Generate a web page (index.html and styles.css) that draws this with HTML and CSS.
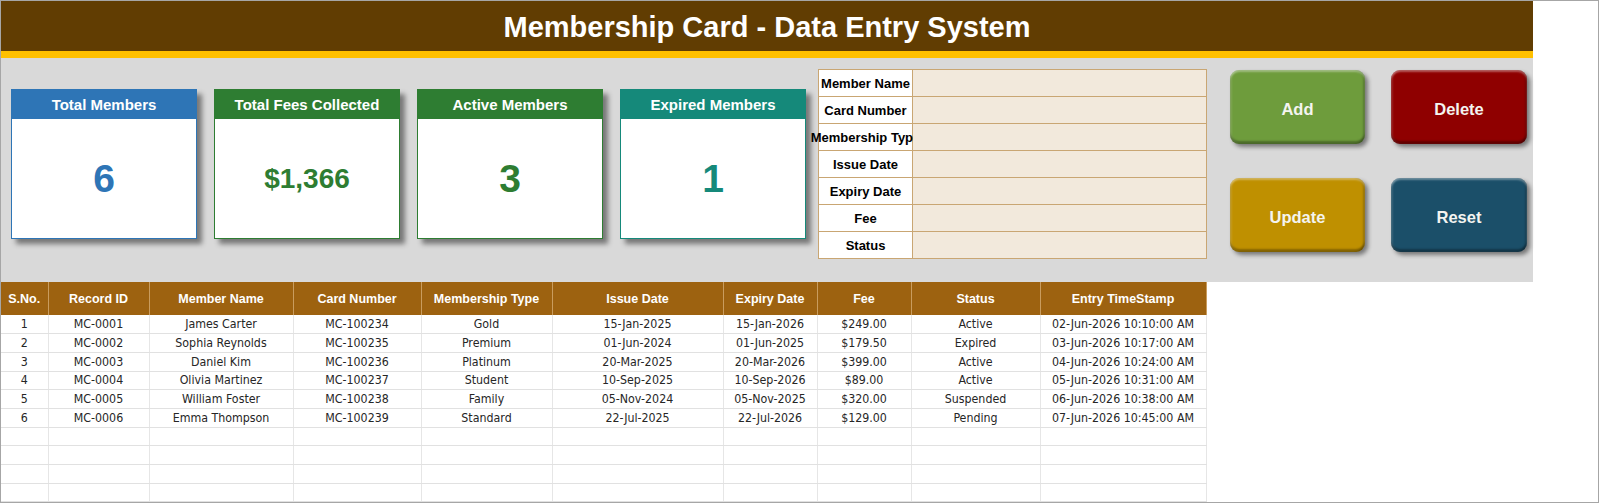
FILE: index.html
```html
<!DOCTYPE html>
<html lang="en">
<head>
    <meta charset="UTF-8">
    <meta name="viewport" content="width=device-width, initial-scale=1.0">
    <title>Membership Card - Data Entry System</title>
    <link rel="stylesheet" href="styles.css">
</head>
<body>
    <div class="sheet">
        <div class="dashboard">
            <div class="title-bar">
                <h1>Membership Card - Data Entry System</h1>
            </div>

            <div class="panel">
                <div class="cards">
                    <div class="card card-blue">
                        <div class="card-head">Total Members</div>
                        <div class="card-value">6</div>
                    </div>
                    <div class="card card-green">
                        <div class="card-head">Total Fees Collected</div>
                        <div class="card-value card-value-money">$1,366</div>
                    </div>
                    <div class="card card-green">
                        <div class="card-head">Active Members</div>
                        <div class="card-value">3</div>
                    </div>
                    <div class="card card-teal">
                        <div class="card-head">Expired Members</div>
                        <div class="card-value">1</div>
                    </div>
                </div>

                <div class="entry-form">
                    <div class="form-label">Member Name</div><div class="form-input"></div>
                    <div class="form-label">Card Number</div><div class="form-input"></div>
                    <div class="form-label">Membership Type</div><div class="form-input"></div>
                    <div class="form-label">Issue Date</div><div class="form-input"></div>
                    <div class="form-label">Expiry Date</div><div class="form-input"></div>
                    <div class="form-label">Fee</div><div class="form-input"></div>
                    <div class="form-label">Status</div><div class="form-input"></div>
                </div>

                <div class="actions">
                    <button class="btn btn-add">Add</button>
                    <button class="btn btn-delete">Delete</button>
                    <button class="btn btn-update">Update</button>
                    <button class="btn btn-reset">Reset</button>
                </div>
            </div>
        </div>

        <table class="records">
            <colgroup>
                <col class="col-sno">
                <col class="col-id">
                <col class="col-name">
                <col class="col-card">
                <col class="col-type">
                <col class="col-issue">
                <col class="col-expiry">
                <col class="col-fee">
                <col class="col-status">
                <col class="col-stamp">
            </colgroup>
            <thead>
                <tr>
                    <th>S.No.</th>
                    <th>Record ID</th>
                    <th>Member Name</th>
                    <th>Card Number</th>
                    <th>Membership Type</th>
                    <th>Issue Date</th>
                    <th>Expiry Date</th>
                    <th>Fee</th>
                    <th>Status</th>
                    <th>Entry TimeStamp</th>
                </tr>
            </thead>
            <tbody>
                <tr>
                    <td>1</td><td>MC-0001</td><td>James Carter</td><td>MC-100234</td><td>Gold</td>
                    <td>15-Jan-2025</td><td>15-Jan-2026</td><td>$249.00</td><td>Active</td><td>02-Jun-2026 10:10:00 AM</td>
                </tr>
                <tr>
                    <td>2</td><td>MC-0002</td><td>Sophia Reynolds</td><td>MC-100235</td><td>Premium</td>
                    <td>01-Jun-2024</td><td>01-Jun-2025</td><td>$179.50</td><td>Expired</td><td>03-Jun-2026 10:17:00 AM</td>
                </tr>
                <tr>
                    <td>3</td><td>MC-0003</td><td>Daniel Kim</td><td>MC-100236</td><td>Platinum</td>
                    <td>20-Mar-2025</td><td>20-Mar-2026</td><td>$399.00</td><td>Active</td><td>04-Jun-2026 10:24:00 AM</td>
                </tr>
                <tr>
                    <td>4</td><td>MC-0004</td><td>Olivia Martinez</td><td>MC-100237</td><td>Student</td>
                    <td>10-Sep-2025</td><td>10-Sep-2026</td><td>$89.00</td><td>Active</td><td>05-Jun-2026 10:31:00 AM</td>
                </tr>
                <tr>
                    <td>5</td><td>MC-0005</td><td>William Foster</td><td>MC-100238</td><td>Family</td>
                    <td>05-Nov-2024</td><td>05-Nov-2025</td><td>$320.00</td><td>Suspended</td><td>06-Jun-2026 10:38:00 AM</td>
                </tr>
                <tr>
                    <td>6</td><td>MC-0006</td><td>Emma Thompson</td><td>MC-100239</td><td>Standard</td>
                    <td>22-Jul-2025</td><td>22-Jul-2026</td><td>$129.00</td><td>Pending</td><td>07-Jun-2026 10:45:00 AM</td>
                </tr>
                <tr><td></td><td></td><td></td><td></td><td></td><td></td><td></td><td></td><td></td><td></td></tr>
                <tr><td></td><td></td><td></td><td></td><td></td><td></td><td></td><td></td><td></td><td></td></tr>
                <tr><td></td><td></td><td></td><td></td><td></td><td></td><td></td><td></td><td></td><td></td></tr>
                <tr><td></td><td></td><td></td><td></td><td></td><td></td><td></td><td></td><td></td><td></td></tr>
            </tbody>
        </table>
    </div>
</body>
</html>
```

FILE: styles.css
```css
* {
    margin: 0;
    padding: 0;
    box-sizing: border-box;
}

body {
    font-family: "Liberation Sans", Arial, sans-serif;
    background: #fff;
    overflow: hidden;
}

.sheet {
    width: 1599px;
    height: 503px;
    border: 1px solid #a6a6a6;
    background: #fff;
    overflow: hidden;
}

.dashboard {
    width: 1532px;
}

.title-bar {
    height: 57px;
    background: #613d02;
    border-bottom: 7px solid #ffc000;
    display: flex;
    justify-content: center;
    align-items: center;
    padding-top: 2px;
}

.title-bar h1 {
    color: #fff;
    font-size: 29px;
    font-weight: 700;
}

.panel {
    height: 224px;
    background: #d9d9d9;
    display: flex;
    align-items: flex-start;
    padding-left: 10px;
}

/* summary cards */
.cards {
    display: flex;
    gap: 17px;
    margin-top: 31px;
}

.card {
    width: 186px;
    height: 150px;
    background: #fff;
    border: 1px solid;
    box-shadow: 5px 5px 5px rgba(0,0,0,0.45);
    display: flex;
    flex-direction: column;
}

.card-head {
    height: 29px;
    color: #fff;
    font-size: 15px;
    font-weight: 700;
    display: flex;
    justify-content: center;
    align-items: center;
}

.card-value {
    flex: 1;
    display: flex;
    justify-content: center;
    align-items: center;
    font-size: 39px;
    font-weight: 700;
}

.card-value-money {
    font-size: 28px;
}

.card-blue { border-color: #2e75b6; color: #2e75b6; }
.card-blue .card-head { background: #2e75b6; }
.card-green { border-color: #2e7d32; color: #2e7d32; }
.card-green .card-head { background: #2e7d32; }
.card-teal { border-color: #15897a; color: #15897a; }
.card-teal .card-head { background: #15897a; }

/* entry form */
.entry-form {
    margin-left: 12px;
    margin-top: 11px;
    display: grid;
    grid-template-columns: 94px 294px;
    grid-auto-rows: 27px;
    border-top: 1px solid #c9a673;
    border-left: 1px solid #c9a673;
}

.form-label {
    background: #fff;
    border-right: 1px solid #c9a673;
    border-bottom: 1px solid #c9a673;
    display: flex;
    justify-content: center;
    align-items: center;
    white-space: nowrap;
    font-size: 13px;
    font-weight: 700;
    color: #000;
}

.form-input {
    position: relative;
    background: #f2e9dc;
    border-right: 1px solid #c9a673;
    border-bottom: 1px solid #c9a673;
}

/* action buttons */
.actions {
    margin-left: 23px;
    margin-top: 12px;
    display: grid;
    grid-template-columns: 135px 136px;
    grid-template-rows: 74px 74px;
    gap: 34px 26px;
}

.btn {
    border: none;
    border-radius: 9px;
    padding-top: 4px;
    color: #f4f4f0;
    font-family: "Liberation Sans", Arial, sans-serif;
    font-size: 16.5px;
    font-weight: 700;
    cursor: pointer;
    box-shadow: inset 0 2px 2px rgba(255,255,255,0.35),
                inset 0 -3px 2px rgba(0,0,0,0.3),
                inset 2px 0 2px rgba(255,255,255,0.12),
                inset -2px 0 2px rgba(0,0,0,0.2),
                3px 3px 4px rgba(0,0,0,0.45);
}

.btn-add { background: #6e9c3c; }
.btn-delete { background: #8f0000; }
.btn-update { background: #bf9000; }
.btn-reset { background: #1b4f69; }

/* records table */
.records {
    border-collapse: collapse;
    table-layout: fixed;
    width: 1205px;
}

.col-sno { width: 47px; }
.col-id { width: 101px; }
.col-name { width: 144px; }
.col-card { width: 128px; }
.col-type { width: 131px; }
.col-issue { width: 171px; }
.col-expiry { width: 94px; }
.col-fee { width: 94px; }
.col-status { width: 129px; }
.col-stamp { width: 166px; }

.records th {
    height: 33px;
    background: #9d6210;
    color: #fff;
    font-size: 12.5px;
    font-weight: 700;
    text-align: center;
    border-right: 1px solid #c99c5e;
    white-space: nowrap;
}

.records td {
    height: 18.7px;
    font-family: "DejaVu Sans Condensed", "Liberation Sans", sans-serif;
    font-size: 12.3px;
    color: #262626;
    text-align: center;
    border-right: 1px solid #e6e6e6;
    border-bottom: 1px solid #e1e1e1;
    white-space: nowrap;
}
```
